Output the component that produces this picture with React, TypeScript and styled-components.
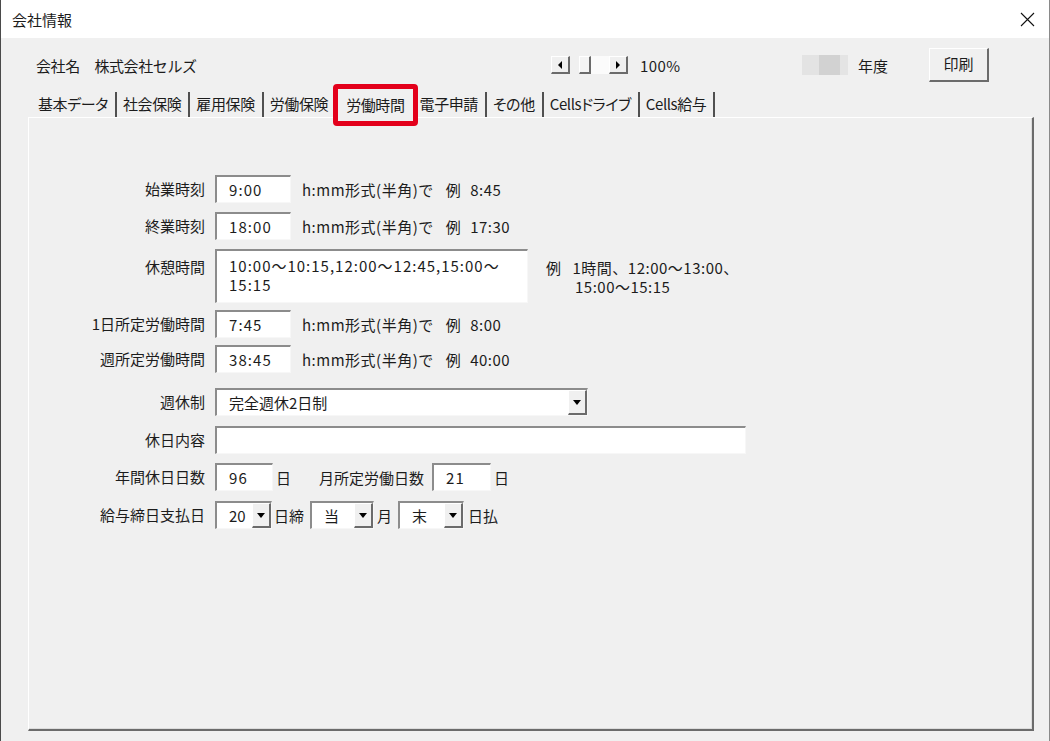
import React from 'react';
import styled, { createGlobalStyle } from 'styled-components';

const tabs = ['基本データ', '社会保険', '雇用保険', '労働保険', '労働時間', '電子申請', 'その他', 'Cellsドライブ', 'Cells給与'];
const activeTab = '労働時間';

function App() {
  return (
    <Window>
      <GlobalStyle />
      <TitleBar>
        <span>会社情報</span>
        <svg width="15" height="15" viewBox="0 0 15 15">
          <path d="M1 1 L14 14 M14 1 L1 14" stroke="#111" strokeWidth="1.1" />
        </svg>
      </TitleBar>
      <Body>
        <HeaderRow>
          <Company>会社名　株式会社セルズ</Company>
          <ZoomCtrl>
            <SpinBtn><Tri $dir="left" /></SpinBtn>
            <Track><Thumb /></Track>
            <SpinBtn><Tri $dir="right" /></SpinBtn>
            <ZoomText>100%</ZoomText>
          </ZoomCtrl>
          <Year>
            <Blur />
            <span>年度</span>
          </Year>
          <PrintBtn>印刷</PrintBtn>
        </HeaderRow>
        <TabRow>
          {tabs.map(t => (
            <Tab key={t} $active={t === activeTab}>{t}</Tab>
          ))}
        </TabRow>
        <Panel>
          <Row>
            <Label>始業時刻</Label>
            <Field $w={76}>9:00</Field>
            <Hint>h:mm形式(半角)で<Ex>例</Ex><ExVal>8:45</ExVal></Hint>
          </Row>
          <Row $top={9}>
            <Label>終業時刻</Label>
            <Field $w={76}>18:00</Field>
            <Hint>h:mm形式(半角)で<Ex>例</Ex><ExVal>17:30</ExVal></Hint>
          </Row>
          <Row $top={9} $alignTop>
            <Label $pad={8}>休憩時間</Label>
            <Area>10:00〜10:15,12:00〜12:45,15:00〜<br />15:15</Area>
            <AreaHint>
              <div>例<ExVal $gap={11}>1時間、12:00〜13:00、</ExVal></div>
              <SecondLine>15:00〜15:15</SecondLine>
            </AreaHint>
          </Row>
          <Row $top={7}>
            <Label>1日所定労働時間</Label>
            <Field $w={76}>7:45</Field>
            <Hint>h:mm形式(半角)で<Ex>例</Ex><ExVal>8:00</ExVal></Hint>
          </Row>
          <Row $top={7}>
            <Label>週所定労働時間</Label>
            <Field $w={76}>38:45</Field>
            <Hint>h:mm形式(半角)で<Ex>例</Ex><ExVal>40:00</ExVal></Hint>
          </Row>
          <Row $top={15}>
            <Label>週休制</Label>
            <Select $w={373}>完全週休2日制<DropBtn><Tri $dir="down" /></DropBtn></Select>
          </Row>
          <Row $top={10}>
            <Label>休日内容</Label>
            <Field $w={531} />
          </Row>
          <Row $top={9}>
            <Label>年間休日日数</Label>
            <Field $w={58}>96</Field>
            <Unit $l={3}>日</Unit>
            <Unit $l={28}>月所定労働日数</Unit>
            <Field $w={59} style={{ marginLeft: 8 }}>21</Field>
            <Unit $l={3}>日</Unit>
          </Row>
          <Row $top={10}>
            <Label>給与締日支払日</Label>
            <Select $w={57}>20<DropBtn><Tri $dir="down" /></DropBtn></Select>
            <Unit $l={2}>日締</Unit>
            <Select $w={64} $l={6}>当<DropBtn><Tri $dir="down" /></DropBtn></Select>
            <Unit $l={3}>月</Unit>
            <Select $w={66} $l={6}>末<DropBtn><Tri $dir="down" /></DropBtn></Select>
            <Unit $l={4}>日払</Unit>
          </Row>
        </Panel>
      </Body>
    </Window>
  );
}

const GlobalStyle = createGlobalStyle`
  * {
    box-sizing: border-box;
  }
  body {
    margin: 0;
    font-family: 'Noto Sans CJK JP', 'Noto Sans', sans-serif;
    color: #1c1c1c;
    background: #fff;
  }
`;

const Window = styled.div`
  width: 1050px;
  height: 741px;
  display: flex;
  flex-direction: column;
  border-left: 1px solid #4a4a4a;
  border-right: 1px solid #8a8a8a;
  font-size: 15px;
`;

const TitleBar = styled.div`
  height: 38px;
  flex-shrink: 0;
  background: #fff;
  display: flex;
  align-items: center;
  justify-content: space-between;
  padding: 0 14px 0 11px;
  svg { display: block; }
`;

const Body = styled.div`
  flex: 1;
  background: #f0f0f0;
  display: flex;
  flex-direction: column;
  padding: 10px 15px 10px 27px;
  min-height: 0;
`;

const HeaderRow = styled.div`
  height: 34px;
  display: grid;
  grid-template-columns: 523px 251px 127px 60px;
  align-items: center;
`;

const Company = styled.div`
  padding-left: 8px;
  letter-spacing: -0.4px;
`;

const ZoomCtrl = styled.div`
  display: flex;
  align-items: center;
`;

const raised = `
  background: #f0f0f0;
  border-top: 1px solid #fff;
  border-left: 1px solid #fff;
  border-right: 2px solid #6b6b6b;
  border-bottom: 2px solid #6b6b6b;
`;

const SpinBtn = styled.div`
  ${raised}
  width: 19px;
  height: 18px;
  display: flex;
  align-items: center;
  justify-content: center;
`;

const Track = styled.div`
  width: 39px;
  height: 18px;
  display: flex;
  background: linear-gradient(90deg, #f0f0f0 0 9px, #fbfbfb 9px);
`;

const Thumb = styled.div`
  ${raised}
  width: 12px;
  height: 18px;
  margin-left: 9px;
  background: #f4f4f4;
`;

const ZoomText = styled.span`
  margin-left: 12px;
  letter-spacing: 0.4px;
`;

const Tri = styled.span<{ $dir: 'left' | 'right' | 'down' }>`
  width: 0;
  height: 0;
  ${p => p.$dir === 'left' && `border-top: 4px solid transparent; border-bottom: 4px solid transparent; border-right: 4px solid #000;`}
  ${p => p.$dir === 'right' && `border-top: 4px solid transparent; border-bottom: 4px solid transparent; border-left: 4px solid #000;`}
  ${p => p.$dir === 'down' && `border-left: 4px solid transparent; border-right: 4px solid transparent; border-top: 5px solid #000;`}
`;

const Year = styled.div`
  display: flex;
  align-items: center;
  gap: 10px;
`;

const Blur = styled.div`
  width: 46px;
  height: 20px;
  background: linear-gradient(90deg, #e3e3e3 0 17px, #d2d2d2 17px 38px, #e4e4e4 38px);
`;

const PrintBtn = styled.div`
  ${raised}
  height: 34px;
  display: flex;
  align-items: center;
  justify-content: center;
  padding-bottom: 2px;
`;

const TabRow = styled.div`
  height: 35px;
  flex-shrink: 0;
  display: flex;
  align-items: flex-end;
  padding-left: 4px;
`;

const Tab = styled.div<{ $active?: boolean }>`
  height: 25px;
  line-height: 24px;
  padding: 0 7px 0 6px;
  border-right: 2px solid #505050;
  font-feature-settings: 'palt';
  letter-spacing: -0.4px;
  white-space: nowrap;
  ${p => p.$active && `
    position: relative;
    z-index: 1;
    height: 42px;
    line-height: 32px;
    margin: 0 -4px -9px -4px;
    padding: 0 8px;
    border: 5px solid #e3001b;
    border-radius: 4px;
    background: #f0f0f0;
  `}
`;

const Panel = styled.div`
  flex: 1;
  border-top: 1px solid #fff;
  border-left: 1px solid #fff;
  border-right: 2px solid #6b6b6b;
  border-bottom: 2px solid #6b6b6b;
  box-shadow: inset -1px -1px 0 #dcdcdc;
  padding-top: 57px;
`;

const Row = styled.div<{ $top?: number; $alignTop?: boolean }>`
  display: flex;
  align-items: ${p => (p.$alignTop ? 'flex-start' : 'center')};
  margin-top: ${p => p.$top ?? 0}px;
`;

const Label = styled.div<{ $pad?: number }>`
  width: 186px;
  flex-shrink: 0;
  text-align: right;
  padding-right: 10px;
  padding-top: ${p => p.$pad ?? 0}px;
  line-height: 20px;
`;

const sunken = `
  background: #fff;
  border-top: 2px solid #8c8c8c;
  border-left: 2px solid #8c8c8c;
  border-right: 1px solid #f7f7f7;
  border-bottom: 1px solid #f7f7f7;
`;

const Field = styled.div<{ $w: number }>`
  ${sunken}
  width: ${p => p.$w}px;
  height: 28px;
  line-height: 25px;
  padding-left: 12px;
  letter-spacing: 1.1px;
  flex-shrink: 0;
`;

const Area = styled.div`
  ${sunken}
  width: 313px;
  height: 54px;
  padding: 5px 0 0 12px;
  line-height: 19px;
  letter-spacing: 1px;
`;

const Select = styled.div<{ $w: number; $l?: number }>`
  ${sunken}
  width: ${p => p.$w}px;
  height: 28px;
  margin-left: ${p => p.$l ?? 0}px;
  padding-left: 12px;
  display: flex;
  align-items: center;
  justify-content: space-between;
  flex-shrink: 0;
`;

const DropBtn = styled.div`
  ${raised}
  width: 19px;
  height: 25px;
  display: flex;
  align-items: center;
  justify-content: center;
`;

const Hint = styled.div`
  margin-left: 11px;
  letter-spacing: 0.5px;
`;

const Ex = styled.span`
  margin-left: 12px;
`;

const ExVal = styled.span<{ $gap?: number }>`
  margin-left: ${p => p.$gap ?? 9}px;
`;

const AreaHint = styled.div`
  margin-left: 18px;
  padding-top: 9px;
  line-height: 19px;
  letter-spacing: 0.5px;
`;

const SecondLine = styled.div`
  padding-left: 29px;
`;

const Unit = styled.span<{ $l: number }>`
  margin-left: ${p => p.$l}px;
`;

export default App;
